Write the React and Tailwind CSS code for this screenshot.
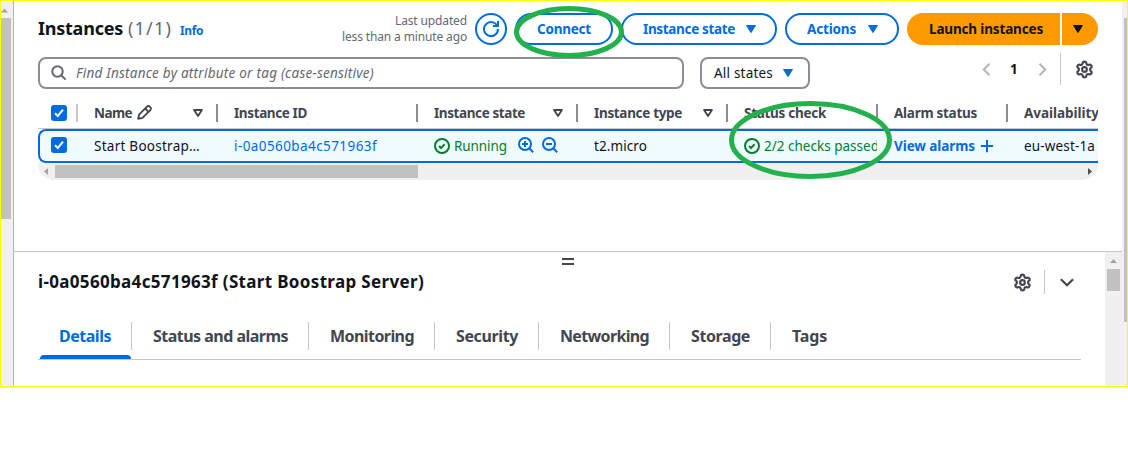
import { useLayoutEffect, useRef } from "react";
import { Settings } from "lucide-react";

// A single line of text whose tracking is adjusted so it fills `w` pixels.
function T({ w, className = "", children }) {
  const ref = useRef(null);
  useLayoutEffect(() => {
    const el = ref.current;
    el.style.letterSpacing = "0px";
    const natural = el.getBoundingClientRect().width;
    const gap = (w - natural) / el.textContent.length;
    el.style.letterSpacing = `${gap}px`;
  }, [w, children]);
  return (
    <span ref={ref} className={`inline-block shrink-0 whitespace-pre ${className}`}>
      {children}
    </span>
  );
}

function Icon({ className = "", children, size = 16, sw = 2 }) {
  return (
    <svg
      width={size}
      height={size}
      viewBox="0 0 16 16"
      fill="none"
      stroke="currentColor"
      strokeWidth={sw}
      strokeLinejoin="round"
      className={`shrink-0 ${className}`}
    >
      {children}
    </svg>
  );
}

const Caret = ({ className = "" }) => (
  <svg width="10" height="8" viewBox="0 0 10 8" className={`shrink-0 ${className}`} fill="currentColor">
    <path d="M0.6 0H9.4Q10.2 0 9.8 0.8L5.6 7.6Q5 8.3 4.4 7.6L0.2 0.8Q-0.2 0 0.6 0Z" />
  </svg>
);

const SortCaret = () => (
  <svg width="10" height="8" viewBox="0 0 10 8" className="shrink-0" fill="none" stroke="currentColor" strokeWidth="1.9" strokeLinejoin="round">
    <path d="M1.1 1H8.9L5 7Z" />
  </svg>
);

const Check = () => (
  <span className="flex size-4 shrink-0 items-center justify-center rounded-[3px] bg-[#006ce0] text-white">
    <Icon>
      <path d="M4 8.2 6.8 11 12 4.6" strokeLinejoin="miter" />
    </Icon>
  </span>
);

const Positive = () => (
  <Icon>
    <circle cx="8" cy="8" r="7" />
    <path d="m5 8 2 2 3.6-3.8" strokeLinejoin="miter" />
  </Icon>
);

function Head({ label, w, width, sort, edit }) {
  return (
    <div className={`flex h-[18px] shrink-0 items-center border-r-2 border-[#8c8c94] pl-4 ${width}`}>
      <T w={w}>{label}</T>
      {edit && (
        <Icon className="ml-[5px]" size={15} sw={2}>
          <path d="M1.3 14.7 2.2 10.2 10.6 1.8C11.5 .9 12.8 .9 13.6 1.8L14.2 2.4C15.1 3.2 15.1 4.5 14.2 5.4L5.8 13.8Z" />
          <path d="M9 4 12 7" />
        </Icon>
      )}
      {sort && (
        <span className="mr-[13px] ml-auto flex">
          <SortCaret />
        </span>
      )}
    </div>
  );
}

const btn =
  "flex h-8 shrink-0 items-center rounded-full border-2 border-[#006ce0] pl-5 text-[13.5px] font-bold text-[#006ce0]";

function Tab({ label, w, width, active, last }) {
  return (
    <div className={`relative flex h-full shrink-0 items-start ${width}`}>
      <div
        className={`flex h-7 w-full items-center ${last ? "" : "border-r border-[#c6c6cd]"} ${active ? "pl-[19px] text-[#006ce0]" : "pl-[21px]"}`}
      >
        <T w={w}>{label}</T>
      </div>
      {active && <span className="absolute bottom-0 left-0 h-1 w-[91px] rounded-t-sm bg-[#006ce0]" />}
    </div>
  );
}

export default function App() {
  return (
    <div className="relative h-[460px] w-[1128px] overflow-hidden bg-white font-['Noto_Sans',sans-serif] text-[13.5px] leading-5 text-[#0f141a]">
      <div className="flex h-[387px] w-full border border-[#ffff00]">
        {/* left scroll strip */}
        <div className="flex w-[13px] shrink-0 flex-col border-r border-[#b4b4bb] bg-[#f0f0f0]">
          <svg width="8" height="5" viewBox="0 0 8 5" className="mt-[7px] fill-[#a3a3a3]">
            <path d="M0 4.5 3.5 .5 7 4.5Z" />
          </svg>
          <div className="mt-[5px] h-[201px] w-[10px] bg-[#c1c1c1]" />
        </div>

        <div className="flex w-[1108px] shrink-0 flex-col">
          {/* instance list */}
          <section className="h-[251px] shrink-0 border-b border-[#c6c6cd] pr-6 pl-6">
            <div className="mt-3 flex h-8 items-center">
              <div className="flex w-[429px] items-center">
                <T w={85} className="-mt-0.5 text-[18px] font-bold">Instances</T>
                <T w={44} className="-mt-0.5 ml-[5px] text-[18px] text-[#656871]">(1/1)</T>
                <T w={23} className="mt-1 ml-2 text-[12px] font-bold text-[#006ce0]">Info</T>
                <div className="ml-auto flex flex-col items-end text-[12px] leading-4 text-[#656871]">
                  <T w={72}>Last updated</T>
                  <T w={125}>less than a minute ago</T>
                </div>
              </div>
              <div className="ml-2 flex size-8 shrink-0 items-center justify-center rounded-full border-2 border-[#006ce0] text-[#006ce0]">
                <Icon>
                  <path d="M10 5h5V0" strokeLinejoin="miter" />
                  <path d="M15 8a7 7 0 1 1-.7-3" />
                </Icon>
              </div>
              <div className={`${btn} ml-2 w-[98px]`}>
                <T w={54}>Connect</T>
              </div>
              <div className={`${btn} ml-2 w-[156px]`}>
                <T w={92}>Instance state</T>
                <Caret className="ml-[11px]" />
              </div>
              <div className={`${btn} ml-2 w-[114px]`}>
                <T w={49}>Actions</T>
                <Caret className="ml-[12px]" />
              </div>
              <div className="ml-2 flex h-8 w-[153px] shrink-0 items-center rounded-l-full bg-[#ff9900] pl-[22px] font-bold">
                <T w={114}>Launch instances</T>
              </div>
              <div className="ml-0.5 flex h-8 w-9 shrink-0 items-center rounded-r-full bg-[#ff9900] pl-[11px]">
                <Caret />
              </div>
            </div>

            <div className="mt-3 flex h-8 items-center">
              <div className="flex h-8 w-[646px] items-center rounded-lg border-2 border-[#8c8c94] pl-[11px] text-[#656871]">
                <Icon>
                  <circle cx="6.5" cy="6.5" r="5.2" />
                  <path d="m14.6 14.6-4.4-4.4" />
                </Icon>
                <T w={298} className="ml-[9px] italic">Find Instance by attribute or tag (case-sensitive)</T>
              </div>
              <div className="ml-4 flex h-8 w-[110px] items-center rounded-lg border-2 border-[#8c8c94] pl-3">
                <T w={59}>All states</T>
                <Caret className="ml-[10px] text-[#006ce0]" />
              </div>
              <div className="-mt-2 ml-auto flex h-8 items-center">
                <svg width="9" height="13" viewBox="0 0 9 13" fill="none" stroke="#b4b4bb" strokeWidth="2">
                  <path d="M7.5 .7 1.7 6.5 7.5 12.3" />
                </svg>
                <T w={8} className="ml-[19px] font-bold">1</T>
                <svg width="9" height="13" viewBox="0 0 9 13" fill="none" stroke="#b4b4bb" strokeWidth="2" className="ml-[20px]">
                  <path d="M1.5 .7 7.3 6.5 1.5 12.3" />
                </svg>
                <div className="ml-[13px] h-8 w-px bg-[#c6c6cd]" />
                <Settings size={19} strokeWidth={2.7} className="mr-[4px] ml-[14px] text-[#424650]" />
              </div>
            </div>

            <div className="mt-2 w-[1060px] overflow-hidden">
              <div className="flex h-[32px] items-center border-b border-[#c6c6cd] font-bold text-[#424650]">
                <div className="flex h-[18px] w-10 shrink-0 items-center border-r-2 border-[#c6c6cd] pl-[13px]">
                  <Check />
                </div>
                <Head label="Name" w={38} width="w-[140px]" edit sort />
                <Head label="Instance ID" w={73} width="w-[200px]" />
                <Head label="Instance state" w={91} width="w-[160px]" sort />
                <Head label="Instance type" w={88} width="w-[150px]" sort />
                <Head label="Status check" w={82} width="w-[150px]" />
                <Head label="Alarm status" w={83} width="w-[130px]" />
                <div className="pl-4">
                  <T w={75}>Availability</T>
                </div>
              </div>
              <div className="flex h-[34px] items-center overflow-hidden rounded-l-lg border-y-2 border-l-2 border-[#006ce0] bg-[#f0fbff]">
                <div className="-mt-0.5 w-[38px] shrink-0 pl-[11px]">
                  <Check />
                </div>
                <div className="w-[140px] shrink-0 pl-4">
                  <T w={106}>Start Boostrap…</T>
                </div>
                <div className="w-[200px] shrink-0 pl-4 text-[#006ce0]">
                  <T w={143}>i-0a0560ba4c571963f</T>
                </div>
                <div className="flex w-[160px] shrink-0 items-center pl-4 text-[#00802f]">
                  <Positive />
                  <T w={53} className="ml-1">Running</T>
                  <Icon className="-mt-0.5 ml-[11px] text-[#006ce0]">
                    <circle cx="7" cy="7" r="6" />
                    <path d="M4 7h6M7 4v6M11.2 11.2l4 4" />
                  </Icon>
                  <Icon className="-mt-0.5 ml-2 text-[#006ce0]">
                    <circle cx="7" cy="7" r="6" />
                    <path d="M4 7h6M11.2 11.2l4 4" />
                  </Icon>
                </div>
                <div className="w-[150px] shrink-0 pl-4">
                  <T w={53}>t2.micro</T>
                </div>
                <div className="flex w-[149px] shrink-0 items-center overflow-hidden pl-4 text-[#00802f]">
                  <Positive />
                  <T w={115} className="ml-1">2/2 checks passed</T>
                </div>
                <div className="flex w-[131px] shrink-0 items-center pl-[17px] font-bold text-[#006ce0]">
                  <T w={81}>View alarms</T>
                  <Icon className="ml-[5px]" size={14}>
                    <path d="M8 1v14M1 8h14" strokeWidth="2.3" />
                  </Icon>
                </div>
                <div className="shrink-0 pl-4">
                  <T w={71}>eu-west-1a</T>
                </div>
              </div>
              <div className="flex h-[17px] items-center rounded-b-2xl bg-[#f0f0f0]">
                <svg width="4" height="7" viewBox="0 0 4 7" className="ml-[6px] fill-[#a3a3a3]">
                  <path d="M4 0V7L0 3.5Z" />
                </svg>
                <div className="ml-[7px] h-[13px] w-[363px] bg-[#c1c1c1]" />
                <svg width="4" height="7" viewBox="0 0 4 7" className="mr-[6px] ml-auto fill-[#505050]">
                  <path d="M0 0V7L4 3.5Z" />
                </svg>
              </div>
            </div>
          </section>

          {/* detail panel */}
          <section className="flex h-[134px]">
            <div className="flex w-[1091px] shrink-0 flex-col pr-6 pl-6">
              <div className="mt-[6px] ml-[524px] h-[7px] w-3 border-y-2 border-[#424650]" />
              <div className="mt-[5px] flex h-6 items-center">
                <T w={386} className="text-[17px] font-bold">i-0a0560ba4c571963f (Start Boostrap Server)</T>
                <Settings size={19} strokeWidth={2.7} className="mr-[12px] ml-auto text-[#424650]" />
                <div className="h-6 w-px bg-[#c6c6cd]" />
                <svg width="14" height="9" viewBox="0 0 14 9" fill="none" stroke="#424650" strokeWidth="2.2" className="mr-[7px] ml-[15px]">
                  <path d="M.9 1.2 7 7.2 13.1 1.2" />
                </svg>
              </div>
              <div className="mt-7 flex h-[38px] w-[1043px] border-b border-[#c6c6cd] pl-0.5 text-[16px] font-bold text-[#424650]">
                <Tab label="Details" w={52} width="w-[92px]" active />
                <Tab label="Status and alarms" w={135} width="w-[177px]" />
                <Tab label="Monitoring" w={84} width="w-[126px]" />
                <Tab label="Security" w={62} width="w-[104px]" />
                <Tab label="Networking" w={89} width="w-[131px]" />
                <Tab label="Storage" w={59} width="w-[101px]" />
                <Tab label="Tags" w={35} width="w-[80px]" last />
              </div>
            </div>
            <div className="flex w-[17px] shrink-0 flex-col items-center bg-[#f0f0f0]">
              <svg width="7" height="4" viewBox="0 0 7 4" className="mt-[7px] fill-[#a3a3a3]">
                <path d="M0 4 3.5 0 7 4Z" />
              </svg>
              <div className="mt-[6px] h-[22px] w-[13px] bg-[#c1c1c1]" />
            </div>
          </section>
        </div>

        {/* page scrollbar */}
        <div className="flex w-[5px] shrink-0 justify-end bg-[#f0f0f0]">
          <div className="mt-[17px] h-[304px] w-[3px] bg-[#c1c1c1]" />
        </div>
      </div>

      {/* marker rings */}
      <svg width="1128" height="460" className="pointer-events-none absolute top-0 left-0" fill="none" stroke="#22b14c" strokeWidth="5">
        <ellipse cx="569" cy="32" rx="52.5" ry="23.5" />
        <ellipse cx="810.5" cy="140" rx="79" ry="36.5" />
      </svg>
    </div>
  );
}
